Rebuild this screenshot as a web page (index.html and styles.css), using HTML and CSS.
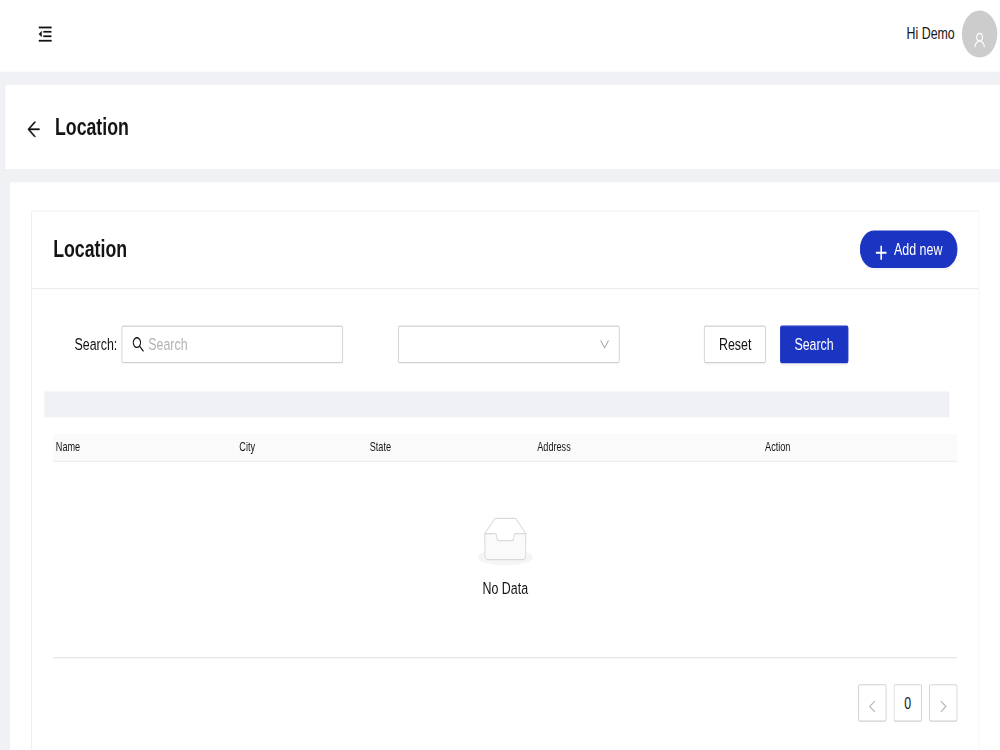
FILE: index.html
```html
<!DOCTYPE html>
<html lang="en">
<head>
  <meta charset="UTF-8">
  <meta name="viewport" content="width=device-width, initial-scale=1.0">
  <title>Location</title>
  <link rel="stylesheet" href="styles.css">
</head>
<body>
  <div class="app">
    <!-- Top bar -->
    <header class="topbar">
      <svg class="icon menu-icon" viewBox="64 64 896 896"><path d="M408 442h480c4.4 0 8-3.6 8-8v-56c0-4.4-3.6-8-8-8H408c-4.4 0-8 3.6-8 8v56c0 4.4 3.6 8 8 8zm-8 204c0 4.4 3.6 8 8 8h480c4.4 0 8-3.6 8-8v-56c0-4.4-3.6-8-8-8H408c-4.4 0-8 3.6-8 8v56zm504-486H120c-4.4 0-8 3.6-8 8v56c0 4.4 3.6 8 8 8h784c4.4 0 8-3.6 8-8v-56c0-4.4-3.6-8-8-8zm0 632H120c-4.4 0-8 3.6-8 8v56c0 4.4 3.6 8 8 8h784c4.4 0 8-3.6 8-8v-56c0-4.4-3.6-8-8-8zM115.4 518.9L271.7 642c5.8 4.6 14.4.5 14.4-6.9V388.9c0-7.4-8.5-11.5-14.4-6.9L115.4 505.1a8.74 8.74 0 000 13.8z"/></svg>
      <div class="user">
        <span class="user-name">Hi Demo</span>
        <span class="avatar">
          <svg class="icon" viewBox="64 64 896 896"><path d="M858.5 763.6a374 374 0 00-80.6-119.5 375.63 375.63 0 00-119.5-80.6c-.4-.2-.8-.3-1.2-.5C719.5 518 760 444.7 760 362c0-137-111-248-248-248S264 225 264 362c0 82.7 40.5 156 102.8 201.1-.4.2-.8.3-1.2.5-44.8 18.9-85 46-119.5 80.6a375.63 375.63 0 00-80.6 119.5A371.7 371.7 0 00136 901.8a8 8 0 008 8.2h60c4.4 0 7.9-3.5 8-7.8 2-77.2 33-149.5 87.8-204.3 56.7-56.7 132-87.9 212.2-87.9s155.5 31.2 212.2 87.9C779 752.7 810 825 812 902.2c.1 4.4 3.6 7.8 8 7.8h60a8 8 0 008-8.2c-1-47.8-10.9-94.3-29.5-138.2zM512 534c-45.9 0-89.1-17.9-121.6-50.4S340 407.9 340 362c0-45.9 17.9-89.1 50.4-121.6S466.1 190 512 190s89.1 17.9 121.6 50.4S684 316.1 684 362c0 45.9-17.9 89.1-50.4 121.6S557.9 534 512 534z"/></svg>
        </span>
      </div>
    </header>

    <!-- Page header -->
    <div class="page-header">
      <svg class="icon back-icon" viewBox="64 64 896 896"><path d="M872 474H286.9l350.2-304c5.6-4.9 2.2-14-5.2-14h-88.5c-3.9 0-7.6 1.4-10.5 3.9L155 487.8a31.96 31.96 0 000 48.3L535.1 866c1.5 1.3 3.3 2 5.2 2h91.5c7.4 0 10.8-9.2 5.2-14L286.9 550H872c4.4 0 8-3.6 8-8v-60c0-4.4-3.6-8-8-8z"/></svg>
      <h1>Location</h1>
    </div>

    <!-- Content -->
    <main class="content">
      <section class="card">
        <div class="card-head">
          <h2>Location</h2>
          <button class="btn btn-primary btn-round">
            <svg class="icon plus-icon" viewBox="0 0 14 14"><path d="M6.1 1h1.8v5.1H13v1.8H7.9V13H6.1V7.9H1V6.1h5.1z"/></svg>
            <span>Add new</span>
          </button>
        </div>

        <div class="card-body">
          <div class="filters">
            <label for="search">Search:</label>
            <div class="field search-field">
              <svg class="icon" viewBox="64 64 896 896"><path d="M909.6 854.5L649.9 594.8C690.2 542.7 712 479 712 412c0-80.2-31.3-155.4-87.9-212.1-56.6-56.7-132-87.9-212.1-87.9s-155.5 31.3-212.1 87.9C143.2 256.5 112 331.8 112 412c0 80.1 31.3 155.5 87.9 212.1C256.5 680.8 331.8 712 412 712c67 0 130.6-21.8 182.7-62l259.7 259.6a8.2 8.2 0 0011.6 0l43.6-43.5a8.2 8.2 0 000-11.6zM570.4 570.4C528 612.7 471.8 636 412 636s-116-23.3-158.4-65.6C211.3 528 188 471.8 188 412s23.3-116.1 65.6-158.4C296 211.3 352.2 188 412 188s116.1 23.2 158.4 65.6S636 352.2 636 412s-23.3 116.1-65.6 158.4z"/></svg>
              <input id="search" type="text" placeholder="Search">
            </div>
            <div class="field select-field">
              <svg class="icon" viewBox="64 64 896 896"><path d="M884 256h-75c-5.1 0-9.9 2.5-12.9 6.6L512 654.2 227.9 262.6c-3-4.1-7.8-6.6-12.9-6.6h-75c-6.5 0-10.3 7.4-6.5 12.7l352.6 486.1c12.8 17.6 39 17.6 51.7 0l352.6-486.1c3.9-5.3.1-12.7-6.4-12.7z"/></svg>
            </div>
            <button class="btn reset-btn">Reset</button>
            <button class="btn btn-primary search-btn">Search</button>
          </div>

          <div class="divider"></div>

          <table class="table">
            <thead>
              <tr>
                <th class="col-name">Name</th>
                <th class="col-city">City</th>
                <th class="col-state">State</th>
                <th class="col-address">Address</th>
                <th>Action</th>
              </tr>
            </thead>
          </table>
          <div class="empty">
            <svg width="64" height="41" viewBox="0 0 64 41">
              <g transform="translate(0 1)" fill="none" fill-rule="evenodd">
                <ellipse fill="#f5f5f5" cx="32" cy="33" rx="31" ry="7"/>
                <g fill-rule="nonzero" stroke="#d9d9d9">
                  <path d="M55 12.76L44.854 1.258C44.367.474 43.656 0 42.907 0H21.093c-.749 0-1.46.474-1.947 1.257L9 12.761V22h46v-9.24z"/>
                  <path fill="#fafafa" d="M41.613 15.931c0-1.605.994-2.93 2.227-2.931H55v18.137C55 33.26 53.68 35 52.05 35h-40.1C10.32 35 9 33.259 9 31.137V13h11.16c1.233 0 2.227 1.323 2.227 2.928v.022c0 1.605 1.005 2.901 2.237 2.901h14.752c1.232 0 2.237-1.308 2.237-2.913v-.007z"/>
                </g>
              </g>
            </svg>
            <p>No Data</p>
          </div>

          <div class="pagination">
            <button class="page-btn"><svg class="icon" viewBox="64 64 896 896"><path d="M724 218.3V141c0-6.7-7.7-10.4-12.9-6.3L260.3 486.8a31.86 31.86 0 000 50.3l450.8 352.1c5.3 4.1 12.9.4 12.9-6.3v-77.3c0-4.9-2.3-9.6-6.1-12.6l-360-281 360-281.1c3.8-3 6.1-7.7 6.1-12.6z"/></svg></button>
            <button class="page-btn">0</button>
            <button class="page-btn"><svg class="icon flip" viewBox="64 64 896 896"><path d="M724 218.3V141c0-6.7-7.7-10.4-12.9-6.3L260.3 486.8a31.86 31.86 0 000 50.3l450.8 352.1c5.3 4.1 12.9.4 12.9-6.3v-77.3c0-4.9-2.3-9.6-6.1-12.6l-360-281 360-281.1c3.8-3 6.1-7.7 6.1-12.6z"/></svg></button>
          </div>
        </div>
      </section>
    </main>
  </div>
</body>
</html>
```
FILE: styles.css
```css
* {
  box-sizing: border-box;
}

html,
body {
  margin: 0;
  height: 100%;
  overflow: hidden;
}

body {
  font-family: "Liberation Sans", Arial, sans-serif;
  font-size: 14px;
  color: #141414;
  background-color: #f0f1f5;
}

.app {
  display: flex;
  flex-direction: column;
  width: 1128px;
  height: 638px;
  overflow: hidden;
  transform: scale(0.88652, 1.17554);
  transform-origin: 0 0;
}

.icon {
  display: block;
  flex: none;
  width: 14px;
  height: 14px;
  fill: currentColor;
}

h1,
h2 {
  margin: 0;
  font-size: 20px;
  line-height: 32px;
}

/* Top bar */
.topbar {
  display: flex;
  flex: none;
  align-items: center;
  justify-content: space-between;
  height: 61px;
  padding: 0 3px 3px 43px;
  background-color: #fff;
}

.menu-icon {
  width: 16px;
  height: 16px;
  stroke: currentColor;
  stroke-width: 16;
}

.user {
  display: flex;
  align-items: center;
  gap: 8px;
}

.user-name {
  margin-top: -2px;
}

.avatar {
  display: flex;
  align-items: center;
  justify-content: center;
  width: 40px;
  height: 40px;
  padding-top: 10px;
  border-radius: 50%;
  background-color: #ccc;
  color: #fff;
}

/* Page header */
.page-header {
  display: flex;
  flex: none;
  align-items: center;
  gap: 16px;
  height: 74px;
  margin: 10px 0 0 5px;
  padding: 0 24px;
  border: 1px solid #e9eaed;
  border-right: none;
  background-color: #fff;
}

.back-icon {
  width: 16px;
  height: 16px;
  margin-top: 4px;
  stroke: currentColor;
  stroke-width: 16;
}

/* Content */
.content {
  flex: 1;
  min-height: 0;
  margin: 10px 0 0 11px;
  padding: 24px 23px 0 24px;
  background-color: #fff;
}

.card {
  height: 100%;
  border: 1px solid #ececec;
  border-bottom: none;
  border-radius: 2px 2px 0 0;
}

.card-head {
  display: flex;
  align-items: center;
  justify-content: space-between;
  height: 66px;
  padding: 0 24px 1px;
  border-bottom: 1px solid #ececec;
}

.card-body {
  padding: 30.5px 24px 0;
}

.btn {
  display: flex;
  align-items: center;
  justify-content: center;
  height: 32px;
  padding: 0 15px;
  border: 1px solid #d0d0d0;
  border-radius: 2px;
  background-color: #fff;
  color: #141414;
  font: inherit;
  box-shadow: 0 2px 0 rgba(0, 0, 0, 0.015);
  cursor: pointer;
}

.btn-primary {
  border-color: #1b34c1;
  background-color: #1b34c1;
  color: #fff;
  box-shadow: 0 2px 0 rgba(0, 0, 0, 0.045);
}

.btn-round {
  gap: 8px;
  padding: 0 16px;
  border-radius: 16px;
}

.plus-icon {
  margin-top: 5px;
}

/* Filters */
.filters {
  display: flex;
  align-items: center;
  padding-left: 24px;
}

.field {
  display: flex;
  align-items: center;
  width: 250px;
  height: 32px;
  padding: 0 11px;
  border: 1px solid #d0d0d0;
  border-radius: 2px;
}

.search-field {
  gap: 4px;
  margin-left: 5px;
}

.search-field input {
  flex: 1;
  min-width: 0;
  padding: 0;
  border: none;
  outline: none;
  font: inherit;
}

.search-field input::placeholder {
  color: #b3b3b3;
}

.select-field {
  justify-content: flex-end;
  margin-left: 62px;
  padding-right: 10px;
}

.select-field .icon {
  width: 12px;
  height: 12px;
  color: rgba(0, 0, 0, 0.35);
}

.reset-btn {
  width: 70px;
  margin-left: 95px;
}

.search-btn {
  width: 77px;
  margin-left: 16px;
  padding-right: 16px;
}

.divider {
  height: 22px;
  margin: 24.5px 9px 0 -10px;
  background-color: #f0f1f5;
}

/* Table */
.table {
  width: 100%;
  height: 24px;
  margin-top: 14px;
  border-collapse: collapse;
  table-layout: fixed;
  font-size: 10.3px;
}

.table th {
  padding: 0 3px;
  border-bottom: 1px solid #ececec;
  background-color: #fafafa;
  font-weight: normal;
  text-align: left;
}

.col-name {
  width: 207px;
}

.col-city {
  width: 147px;
}

.col-state {
  width: 189px;
}

.col-address {
  width: 257px;
}

.empty {
  display: flex;
  flex-direction: column;
  align-items: center;
  height: 167px;
  padding-top: 47px;
  border-bottom: 1px solid #e4e4e4;
}

.empty p {
  margin: 11px 0 0;
  line-height: 16px;
}

.pagination {
  display: flex;
  justify-content: flex-end;
  gap: 8px;
  margin-top: 22px;
}

.page-btn {
  display: flex;
  align-items: center;
  justify-content: center;
  width: 32px;
  height: 32px;
  padding: 0;
  border: 1px solid #d0d0d0;
  border-radius: 2px;
  background-color: #fff;
  color: #141414;
  font: inherit;
}

.page-btn .icon {
  width: 12px;
  height: 12px;
  margin-top: 5px;
  color: rgba(0, 0, 0, 0.3);
}

.flip {
  transform: scaleX(-1);
}
```
